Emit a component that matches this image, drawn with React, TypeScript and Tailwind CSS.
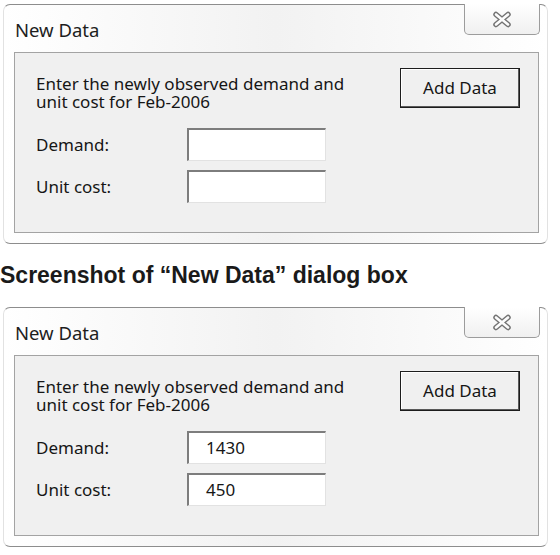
import React from 'react';

const uiFont = { fontFamily: '"Noto Sans", "Open Sans", sans-serif' };

// outlined "X" used by the close button
const CloseGlyph = () => (
  <svg width="22" height="17" viewBox="0 0 22 17">
    <g strokeLinecap="round">
      <path d="M5 3.5 L17 13.5 M17 3.5 L5 13.5" stroke="#737373" strokeWidth="5.5" />
      <path d="M5 3.5 L17 13.5 M17 3.5 L5 13.5" stroke="#fcfcfc" strokeWidth="2.6" />
    </g>
  </svg>
);

const Field = ({ label, value }: { label: string; value?: string }) => (
  <div className="flex items-center h-[33px]">
    <span className="w-[151px] text-[17px] text-[#161616]">{label}</span>
    <div className="w-[139px] h-[33px] bg-white border-t-2 border-l-2 border-t-[#7d7d7d] border-l-[#7d7d7d] border-r border-b border-r-[#e2e2e2] border-b-[#e2e2e2] flex items-center pl-[17px] text-[17px] text-[#161616]">
      {value}
    </div>
  </div>
);

const NewDataDialog = ({ demand, cost }: { demand?: string; cost?: string }) => (
  <div
    className="relative ml-[3px] w-[545px] h-[240px] rounded-[7px] border border-[#8d8d8d] border-x-[#e2e2e2] bg-gradient-to-r from-white via-[#f2f2f2] to-white"
    style={uiFont}
  >
    <div className="absolute -top-px right-[7px] w-[76px] h-[31px] rounded-b-[5px] border border-t-0 border-[#9c9c9c] bg-gradient-to-b from-white to-[#f0f0f0] flex items-center justify-center">
      <CloseGlyph />
    </div>
    <div className="h-[47px] pl-[11px] pt-[11px] text-[18.5px] text-[#1e1e1e]">New Data</div>
    <div className="ml-[10px] w-[525px] h-[181px] border border-[#a3a3a3] bg-[#f0f0f0] flex justify-between pl-[21px] pr-[18px] pt-[15px]">
      <div className="pt-[7px]">
        <p className="text-[17px] leading-[18px] text-[#161616]">
          Enter the newly observed demand and
          <br />
          unit cost for Feb-2006
        </p>
        <div className="mt-[17px] flex flex-col gap-[9px]">
          <Field label="Demand:" value={demand} />
          <Field label="Unit cost:" value={cost} />
        </div>
      </div>
      <button className="w-[120px] h-[40px] border border-[#1c1c1c] bg-[#f0f0f0] shadow-[inset_-1px_-1px_0_#5a5a5a,inset_1px_1px_0_#ffffff] text-[17px] text-[#161616]">
        Add Data
      </button>
    </div>
  </div>
);

export default function App() {
  return (
    <div className="w-[560px] h-[555px] bg-white overflow-hidden pt-[4px]">
      <NewDataDialog />
      <div
        className="h-[63px] flex items-center text-[23px] font-bold text-[#1a1a1a] whitespace-nowrap"
        style={{ fontFamily: '"Liberation Sans", Arial, sans-serif' }}
      >
        Screenshot of “New Data” dialog box
      </div>
      <NewDataDialog demand="1430" cost="450" />
    </div>
  );
}
